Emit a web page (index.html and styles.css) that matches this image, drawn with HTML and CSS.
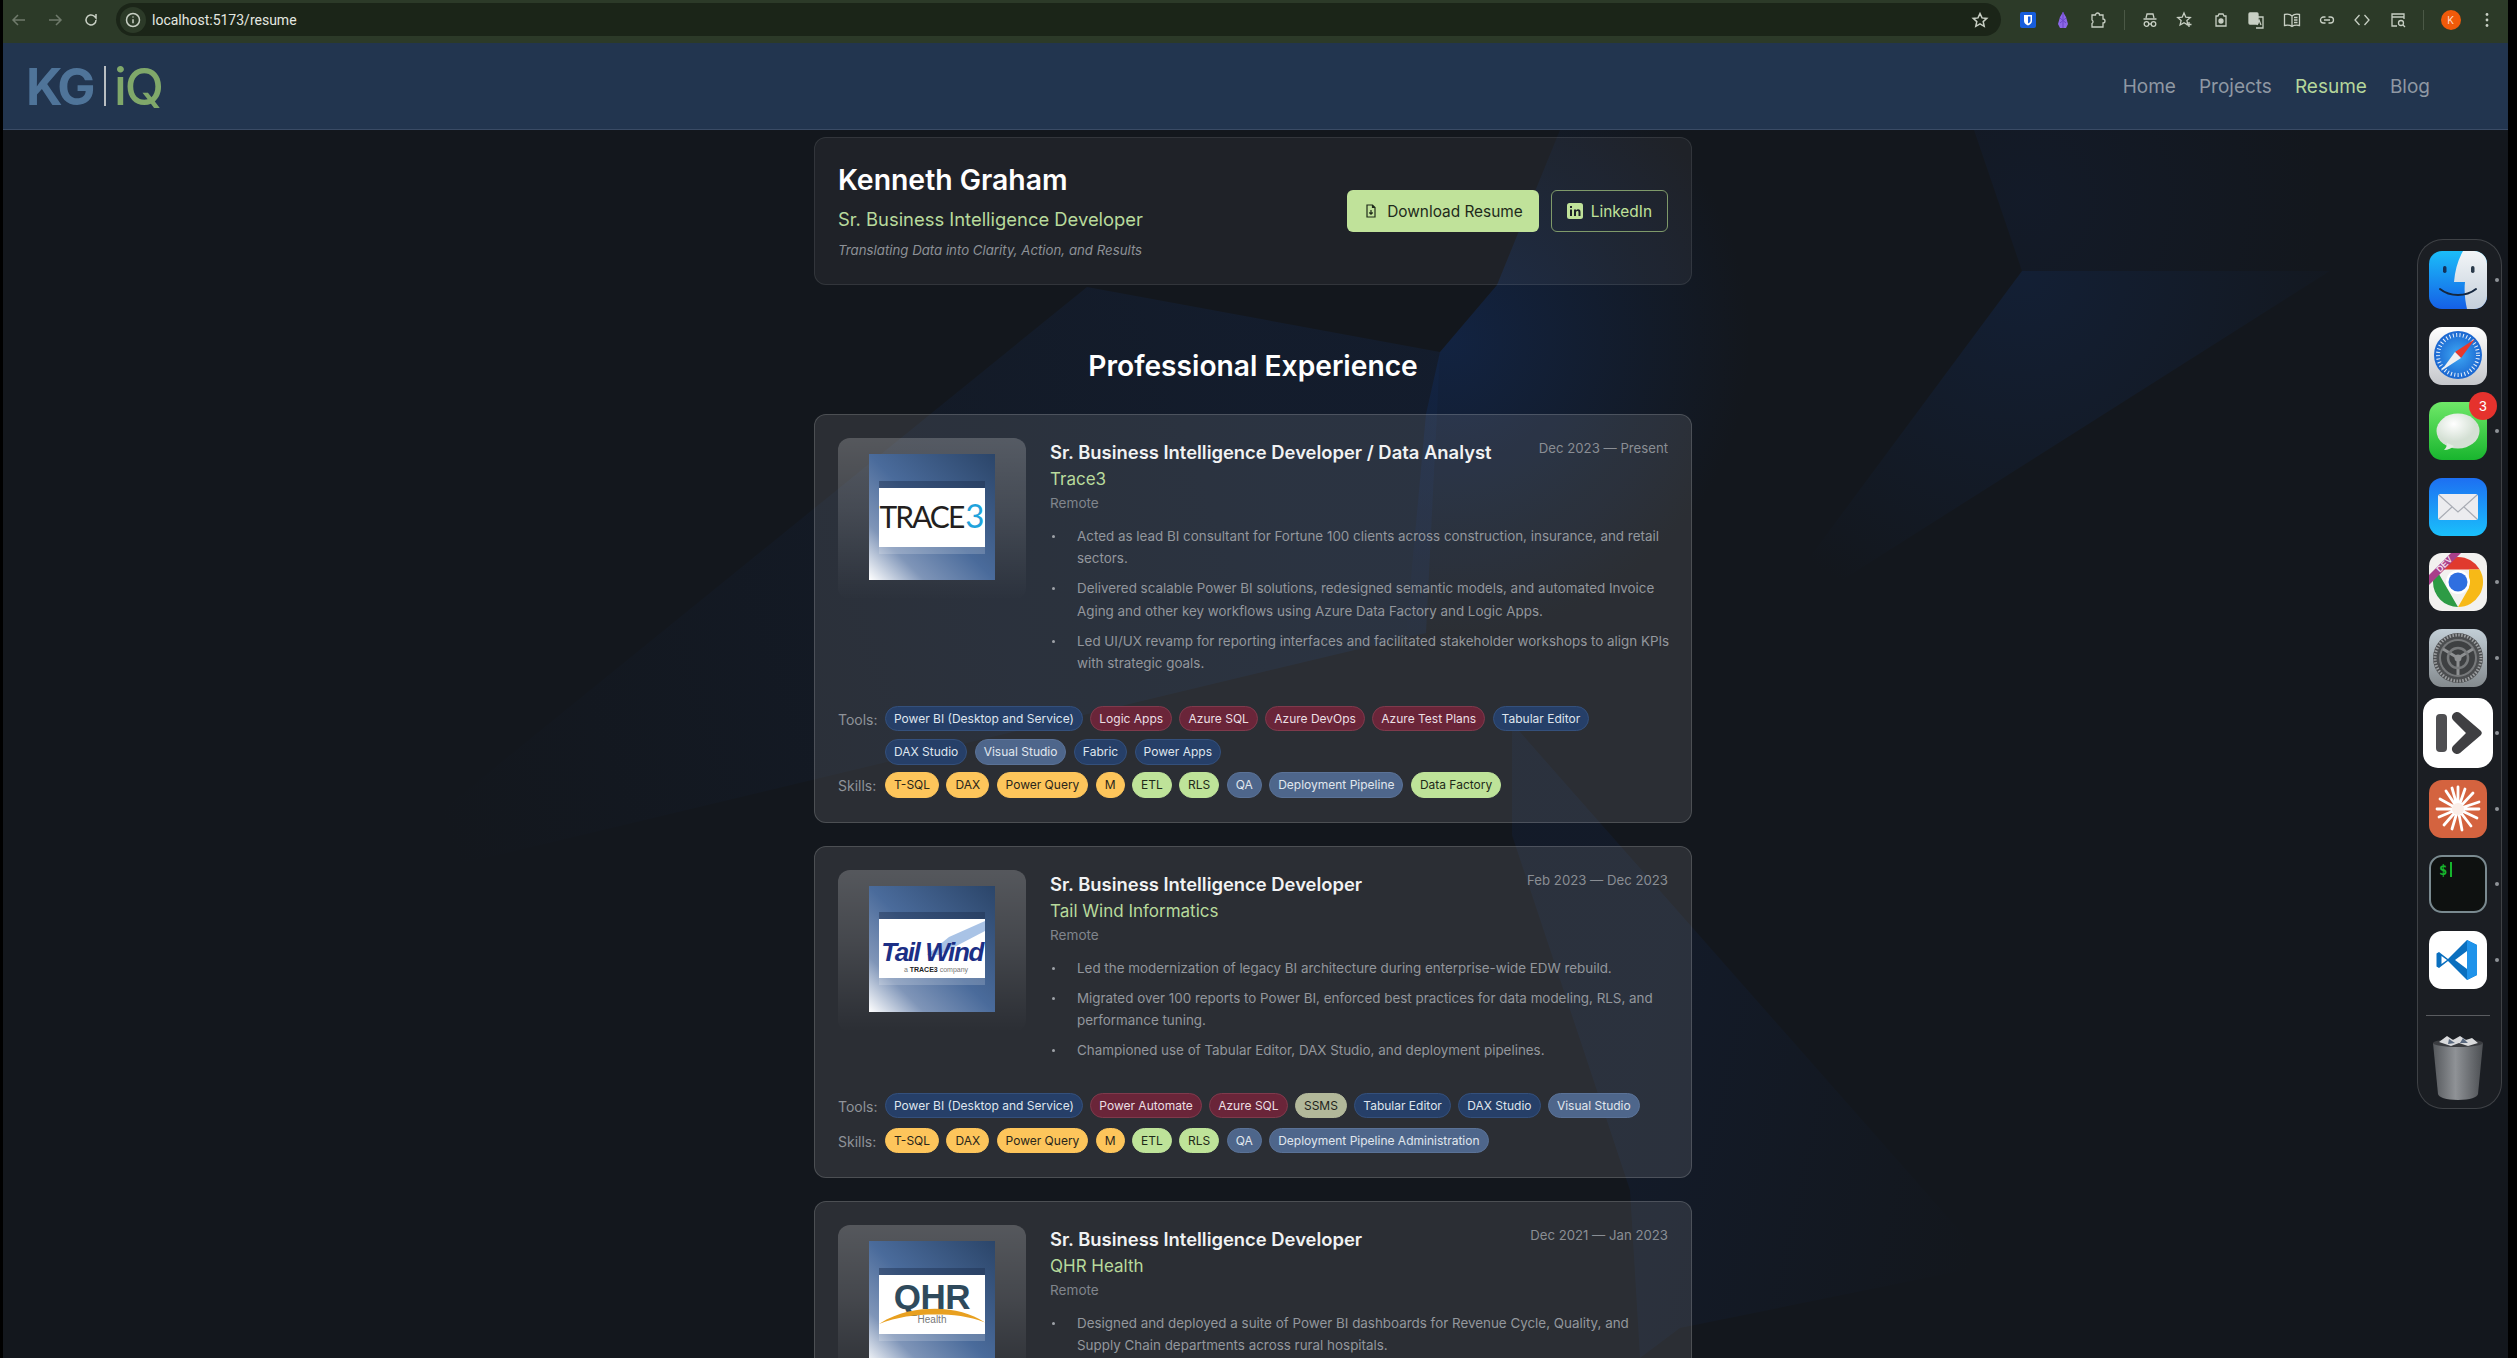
FILE: index.html
```html
<!DOCTYPE html>
<html lang="en">
<head>
<meta charset="utf-8">
<title>Resume</title>
<link rel="stylesheet" href="styles.css">
</head>
<body>
<div class="frame">
  <svg class="backdrop" viewBox="3 0 2505 1358" aria-hidden="true">
    <defs>
      <radialGradient id="gA" gradientUnits="userSpaceOnUse" cx="2022" cy="200" r="300"><stop offset="0" stop-color="#13203a" stop-opacity=".4"/><stop offset="1" stop-color="#13203a" stop-opacity="0"/></radialGradient>
      <radialGradient id="gB" gradientUnits="userSpaceOnUse" cx="2022" cy="271" r="360"><stop offset="0" stop-color="#13233f" stop-opacity=".7"/><stop offset="1" stop-color="#13233f" stop-opacity="0"/></radialGradient>
      <linearGradient id="gC" gradientUnits="userSpaceOnUse" x1="1300" y1="520" x2="440" y2="820"><stop offset="0" stop-color="#14233f" stop-opacity=".45"/><stop offset="1" stop-color="#14233f" stop-opacity="0"/></linearGradient>
      <linearGradient id="gD" gradientUnits="userSpaceOnUse" x1="1620" y1="1150" x2="1980" y2="1230"><stop offset="0" stop-color="#13203a" stop-opacity=".4"/><stop offset="1" stop-color="#13203a" stop-opacity="0"/></linearGradient>
      <radialGradient id="gE" gradientUnits="userSpaceOnUse" cx="1450" cy="340" r="300"><stop offset="0" stop-color="#12264a" stop-opacity=".8"/><stop offset="1" stop-color="#12264a" stop-opacity="0"/></radialGradient>
    </defs>
    <polygon points="1974,130 2022,271 2330,271 2420,130" fill="url(#gA)"/>
    <polygon points="2022,271 2330,271 1749,639" fill="url(#gB)"/>
    <polygon points="340,893 1087,287 1440,352 1426,633" fill="url(#gC)"/>
    <polygon points="1990,1265 1512,723 1512,835 1630,1190 1640,1358 1680,1328" fill="url(#gD)"/>
    <polygon points="1440,352 1497,285 1560,130 1760,130 1760,700 1400,700 1426,414" fill="url(#gE)"/>
  </svg>

  <div class="toolbar">
    <div class="tb-nav">
      <svg class="tb-icon dim" viewBox="0 0 18 18"><path d="M15 9H3M8 4 3 9l5 5"/></svg>
      <svg class="tb-icon dim" viewBox="0 0 18 18"><path d="M3 9h12M10 4l5 5-5 5"/></svg>
      <svg class="tb-icon" viewBox="0 0 18 18"><path d="M14 9a5 5 0 1 1-1.600-3.700L14 7V3"/></svg>
    </div>
    <div class="omnibox">
      <span class="site-info"><svg class="tb-icon" viewBox="0 0 18 18"><circle cx="9" cy="9" r="6.500"/><path d="M9 8.300v4M9 5.400v1"/></svg></span>
      <span class="url">localhost:5173/resume</span>
      <svg class="tb-icon star" viewBox="0 0 18 18"><path d="m9 2.500 2 4.400 4.800.5-3.600 3.200 1 4.700L9 12.900l-4.200 2.400 1-4.700-3.600-3.200 4.800-.5z"/></svg>
    </div>
    <div class="extensions">
      <svg class="ext" viewBox="0 0 18 18"><rect x="1" y="1" width="16" height="16" rx="2" fill="#175ddc"/><path d="M5 4h8v6c0 2-2 3.500-4 4.500C7 13.500 5 12 5 10z" fill="#fff"/><path d="M9 5.500h2.500V10c0 1-1.300 1.900-2.500 2.500z" fill="#175ddc"/></svg>
      <svg class="ext" viewBox="0 0 18 18"><path d="M9 1 12 6l2 7-2 4H6l-2-4 2-7z" fill="#8c67e8"/><path d="M9 1v16M6 7l6 5M12 7l-6 5" stroke="#6a45c8" fill="none"/></svg>
      <svg class="ext line" viewBox="0 0 18 18"><path d="M3 4h3.500a2 2 0 0 1 4 0H14v4a2 2 0 0 1 0 4v4H3v-3.500a2 2 0 0 0 0-3.500V4z"/></svg>
      <span class="tb-sep"></span>
      <svg class="ext line" viewBox="0 0 18 18"><path d="M5 7l1-4h6l1 4M2.500 8h13"/><circle cx="5.500" cy="13" r="2.300"/><circle cx="12.500" cy="13" r="2.300"/><path d="M7.800 13h2.400"/></svg>
      <svg class="ext line" viewBox="0 0 18 18"><path d="m8 2 1.800 4.200 4.500.4-3.400 3 1 4.400L8 11.700 4.100 14l1-4.400-3.400-3 4.500-.4z"/><path d="M13 11v5M10.500 13.500h5"/></svg>
      <svg class="ext line" viewBox="0 0 18 18"><path d="M4 5h2l1-2h4l1 2h2v10H4z"/><circle cx="9" cy="10" r="2" fill="#c8cfc4"/></svg>
      <svg class="ext line" viewBox="0 0 18 18"><rect x="2" y="2" width="9" height="11" rx="1" fill="#c8cfc4"/><path d="M7 6h9v11H9"/><path d="M10 14l2-5 2 5"/></svg>
      <svg class="ext line" viewBox="0 0 18 18"><path d="M9 5C7 3 4 3 1.500 3.500v11C4 14 7 14 9 15.500 11 14 14 14 16.500 14.500v-11C14 3 11 3 9 5zM9 5v10.500M11 6.500h3.500M11 9h3.500M11 11.500h3.500"/></svg>
      <svg class="ext line" viewBox="0 0 18 18"><path d="M7.500 6H5.500a3 3 0 0 0 0 6h2M10.500 6h2a3 3 0 0 1 0 6h-2M6 9h6"/></svg>
      <svg class="ext line" viewBox="0 0 18 18"><path d="M6.500 4 2 9l4.500 5M11.500 4 16 9l-4.500 5"/></svg>
      <svg class="ext line" viewBox="0 0 18 18"><path d="M8 15H3V3h12v5M3 6h12"/><circle cx="12" cy="12" r="2.500"/><path d="m14 14 2 2"/></svg>
      <span class="tb-sep"></span>
      <span class="avatar">K</span>
      <svg class="ext dots" viewBox="0 0 18 18"><circle cx="9" cy="3.500" r="1.400"/><circle cx="9" cy="9" r="1.400"/><circle cx="9" cy="14.500" r="1.400"/></svg>
    </div>
  </div>

  <header class="site-nav">
    <div class="logo"><span class="logo-kg">KG</span><span class="logo-bar"></span><span class="logo-iq">iQ</span></div>
    <nav class="nav-links">
      <a class="nav-link">Home</a>
      <a class="nav-link">Projects</a>
      <a class="nav-link active">Resume</a>
      <a class="nav-link">Blog</a>
    </nav>
  </header>

  <main class="page">
    <section class="hero card-soft">
      <div>
        <h1 class="hero-name">Kenneth Graham</h1>
        <p class="hero-role">Sr. Business Intelligence Developer</p>
        <p class="hero-tag">Translating Data into Clarity, Action, and Results</p>
      </div>
      <div class="hero-actions">
        <a class="btn btn-solid">
          <svg class="btn-icon" viewBox="0 0 14 14"><path d="M3 1h5.500L11 3.500V13H3zM8.500 1v2.500H11M7 6v4M5.300 8.500 7 10.200l1.700-1.700"/></svg>
          Download Resume</a>
        <a class="btn btn-outline">
          <svg class="btn-li" viewBox="0 0 16 16"><rect width="16" height="16" rx="2.500" fill="#c0e29a"/><path d="M3 6.500h2V13H3zM3 3h2v2H3zM7 6.500h2v1c.5-.8 1.300-1.200 2.200-1.200 1.500 0 2.300 1 2.300 2.700v4h-2V9.500c0-.9-.4-1.400-1.100-1.400-.8 0-1.400.6-1.400 1.500V13H7z" fill="#1c2128"/></svg>
          LinkedIn</a>
      </div>
    </section>

    <h2 class="section-title">Professional Experience</h2>

    <article class="job">
      <div class="job-top">
        <div class="logo-box"><div class="logo-img"><div class="logo-panel">
          <span class="trace">TRACE<span class="trace-3">3</span></span>
        </div></div></div>
        <div class="job-body">
          <div class="job-head">
            <h3 class="job-title">Sr. Business Intelligence Developer / Data Analyst</h3>
            <span class="job-date">Dec 2023 — Present</span>
          </div>
          <p class="job-company">Trace3</p>
          <p class="job-place">Remote</p>
          <ul class="job-list">
            <li>Acted as lead BI consultant for Fortune 100 clients across construction, insurance, and retail sectors.</li>
            <li>Delivered scalable Power BI solutions, redesigned semantic models, and automated Invoice Aging and other key workflows using Azure Data Factory and Logic Apps.</li>
            <li>Led UI/UX revamp for reporting interfaces and facilitated stakeholder workshops to align KPIs with strategic goals.</li>
          </ul>
        </div>
      </div>
      <div class="tag-block">
        <div class="tag-row"><span class="tag-label">Tools:</span><div class="tags">
          <span class="chip blue">Power BI (Desktop and Service)</span><span class="chip red">Logic Apps</span><span class="chip red">Azure SQL</span><span class="chip red">Azure DevOps</span><span class="chip red">Azure Test Plans</span><span class="chip blue">Tabular Editor</span><span class="chip blue">DAX Studio</span><span class="chip steel">Visual Studio</span><span class="chip blue">Fabric</span><span class="chip blue">Power Apps</span>
        </div></div>
        <div class="tag-row"><span class="tag-label">Skills:</span><div class="tags">
          <span class="chip amber">T-SQL</span><span class="chip amber">DAX</span><span class="chip amber">Power Query</span><span class="chip amber">M</span><span class="chip green">ETL</span><span class="chip green">RLS</span><span class="chip steel">QA</span><span class="chip steel">Deployment Pipeline</span><span class="chip green">Data Factory</span>
        </div></div>
      </div>
    </article>

    <article class="job">
      <div class="job-top">
        <div class="logo-box"><div class="logo-img"><div class="logo-panel tail-panel">
          <svg class="tail-swoosh" viewBox="0 0 106 59" preserveAspectRatio="none"><polygon points="106,2 106,12 60,36 48,36 70,18" fill="#a9c3e6"/></svg>
          <span class="tail">Tail Wind</span>
          <span class="tail-sub">a <b>TRACE3</b> company</span>
        </div></div></div>
        <div class="job-body">
          <div class="job-head">
            <h3 class="job-title">Sr. Business Intelligence Developer</h3>
            <span class="job-date">Feb 2023 — Dec 2023</span>
          </div>
          <p class="job-company">Tail Wind Informatics</p>
          <p class="job-place">Remote</p>
          <ul class="job-list">
            <li>Led the modernization of legacy BI architecture during enterprise-wide EDW rebuild.</li>
            <li>Migrated over 100 reports to Power BI, enforced best practices for data modeling, RLS, and performance tuning.</li>
            <li>Championed use of Tabular Editor, DAX Studio, and deployment pipelines.</li>
          </ul>
        </div>
      </div>
      <div class="tag-block">
        <div class="tag-row"><span class="tag-label">Tools:</span><div class="tags">
          <span class="chip blue">Power BI (Desktop and Service)</span><span class="chip red">Power Automate</span><span class="chip red">Azure SQL</span><span class="chip sage">SSMS</span><span class="chip blue">Tabular Editor</span><span class="chip blue">DAX Studio</span><span class="chip steel">Visual Studio</span>
        </div></div>
        <div class="tag-row"><span class="tag-label">Skills:</span><div class="tags">
          <span class="chip amber">T-SQL</span><span class="chip amber">DAX</span><span class="chip amber">Power Query</span><span class="chip amber">M</span><span class="chip green">ETL</span><span class="chip green">RLS</span><span class="chip steel">QA</span><span class="chip steel">Deployment Pipeline Administration</span>
        </div></div>
      </div>
    </article>

    <article class="job">
      <div class="job-top">
        <div class="logo-box"><div class="logo-img"><div class="logo-panel qhr-panel">
          <span class="qhr">QHR</span>
          <svg class="qhr-arc" viewBox="0 0 106 20" preserveAspectRatio="none"><path d="M0 20C20 4 40 1 56 1c20 0 36 6 50 17-16-8-32-10-50-10C36 8 18 11 0 20z" fill="#e8a020"/></svg>
          <span class="qhr-sub">Health</span>
        </div></div></div>
        <div class="job-body">
          <div class="job-head">
            <h3 class="job-title">Sr. Business Intelligence Developer</h3>
            <span class="job-date">Dec 2021 — Jan 2023</span>
          </div>
          <p class="job-company">QHR Health</p>
          <p class="job-place">Remote</p>
          <ul class="job-list">
            <li>Designed and deployed a suite of Power BI dashboards for Revenue Cycle, Quality, and Supply Chain departments across rural hospitals.</li>
          </ul>
        </div>
      </div>
    </article>
  </main>

  <aside class="dock">
    <div class="dock-item running">
      <svg class="dock-icon" viewBox="0 0 58 58"><defs><linearGradient id="fa" x1="0" y1="0" x2="0" y2="1"><stop offset="0" stop-color="#1bbdf9"/><stop offset="1" stop-color="#1560e6"/></linearGradient><linearGradient id="fb" x1="0" y1="0" x2="0" y2="1"><stop offset="0" stop-color="#f2f5f7"/><stop offset="1" stop-color="#c4cfda"/></linearGradient><clipPath id="fc"><rect width="58" height="58" rx="13"/></clipPath></defs><g clip-path="url(#fc)"><rect width="58" height="58" fill="url(#fa)"/><path d="M34 0C29 9 26 19 25 31h11c-1 9 0 18 2 27h20V0z" fill="url(#fb)"/></g><rect x="14" y="15" width="3.500" height="7" rx="1.700" fill="#13325a"/><rect x="42" y="15" width="3.500" height="7" rx="1.700" fill="#2a3a4a"/><path d="M11 38c10 8 26 8 36 0" fill="none" stroke="#15273f" stroke-width="2" stroke-linecap="round"/></svg>
    </div>
    <div class="dock-item">
      <svg class="dock-icon" viewBox="0 0 58 58"><defs><linearGradient id="sa" x1="0" y1="0" x2="0" y2="1"><stop offset="0" stop-color="#fff"/><stop offset="1" stop-color="#c4c6ca"/></linearGradient><radialGradient id="sb"><stop offset="0" stop-color="#3fa9f5"/><stop offset="1" stop-color="#1a66d0"/></radialGradient></defs><rect width="58" height="58" rx="13" fill="url(#sa)"/><circle cx="29" cy="28" r="24" fill="url(#sb)"/><circle cx="29" cy="28" r="20" fill="none" stroke="#fff" stroke-width="4" stroke-dasharray="1 2.400" opacity=".9"/><polygon points="46,12 32,31 26,25" fill="#e8382c"/><polygon points="12,44 32,31 26,25" fill="#eef0f2"/></svg>
    </div>
    <div class="dock-item running">
      <svg class="dock-icon" viewBox="0 0 58 58"><defs><linearGradient id="ma" x1="0" y1="0" x2="0" y2="1"><stop offset="0" stop-color="#6fe868"/><stop offset="1" stop-color="#18b52e"/></linearGradient><radialGradient id="mb" cx=".4" cy=".3"><stop offset="0" stop-color="#fff"/><stop offset="1" stop-color="#d4e0d4"/></radialGradient></defs><rect width="58" height="58" rx="13" fill="url(#ma)"/><ellipse cx="29" cy="29" rx="21.500" ry="17.500" fill="url(#mb)"/><path d="M18 41c0 3-1 5-3 7 4 0 8-2 10-4z" fill="#e4ece4"/></svg>
      <span class="dock-badge">3</span>
    </div>
    <div class="dock-item">
      <svg class="dock-icon" viewBox="0 0 58 58"><defs><linearGradient id="ea" x1="0" y1="0" x2="0" y2="1"><stop offset="0" stop-color="#1d6ff2"/><stop offset="1" stop-color="#1ac0fb"/></linearGradient></defs><rect width="58" height="58" rx="13" fill="url(#ea)"/><rect x="9" y="16" width="40" height="26" rx="2.500" fill="#ececef"/><path d="M10 17l19 17 19-17M10 41l13-12M48 41 35 29" fill="none" stroke="#a9acb4" stroke-width="1.200"/></svg>
    </div>
    <div class="dock-item running">
      <svg class="dock-icon" viewBox="0 0 58 58"><defs><clipPath id="cc"><rect width="58" height="58" rx="13"/></clipPath></defs><rect width="58" height="58" rx="13" fill="#f2f1ef"/><path d="M29 4a25 25 0 0 1 21.700 12.500H29z" fill="#e03a2e"/><path d="M7.300 16.500A25 25 0 0 1 29 4v12.500z" fill="#e03a2e"/><path d="M4 29A25 25 0 0 1 7.300 16.500L18 35l11 19A25 25 0 0 1 4 29z" fill="#2d9b45"/><path d="M50.700 16.500A25 25 0 0 1 29 54l11-19V16.500z" fill="#f7b917"/><circle cx="29" cy="29" r="12" fill="#fff"/><circle cx="29" cy="29" r="9.500" fill="#2f6fe0"/><g clip-path="url(#cc)"><path d="M-6 28 28-6l10 0L-6 38z" fill="#a83f8a"/></g><text class="dev-text" x="11" y="20" transform="rotate(-45 11 20)">DEV</text></svg>
    </div>
    <div class="dock-item running">
      <svg class="dock-icon" viewBox="0 0 58 58"><defs><linearGradient id="ga" x1="0" y1="0" x2="0" y2="1"><stop offset="0" stop-color="#c2ced6"/><stop offset="1" stop-color="#848a8e"/></linearGradient></defs><rect width="58" height="58" rx="13" fill="url(#ga)"/><circle cx="29" cy="29" r="25" fill="#4c4e50"/><circle cx="29" cy="29" r="23" fill="none" stroke="#9ea0a2" stroke-width="3" stroke-dasharray="1.500 1.500"/><circle cx="29" cy="29" r="19" fill="#77797b"/><circle cx="29" cy="29" r="17" fill="#3e4042"/><path d="M29 29 14 20M29 29l15-9M29 29v17" stroke="#8e9092" stroke-width="3" fill="none"/><circle cx="29" cy="29" r="10" fill="none" stroke="#77797b" stroke-width="2.500"/><circle cx="29" cy="29" r="3.500" fill="#8e9092"/></svg>
    </div>
    <div class="dock-item big running">
      <svg class="dock-icon-big" viewBox="0 0 70 70"><rect width="70" height="70" rx="15" fill="#fff"/><rect x="13" y="16" width="11" height="38" rx="4" fill="#4f4f52"/><path d="M30 16a5 5 0 0 1 7-1l21 18a3 3 0 0 1 0 4L37 55a5 5 0 0 1-7-1 5 5 0 0 1 0-6l13-13-13-13a5 5 0 0 1 0-6z" fill="#3f3f42"/></svg>
    </div>
    <div class="dock-item running">
      <svg class="dock-icon" viewBox="0 0 58 58"><rect width="58" height="58" rx="13" fill="#d4633f"/><g stroke="#fff" stroke-linecap="round" fill="none"><path d="M29 29V7M29 29l7-20M29 29 44 13M29 29 50 22M29 29h21M29 29l19 9M29 29l13 17M29 29l4 21M29 29l-6 20M29 29 15 45M29 29 10 37M29 29H8M29 29 11 19M29 29 17 11M29 29 23 8" stroke-width="2.800"/></g><circle cx="29" cy="29" r="6" fill="#fbeee8"/></svg>
    </div>
    <div class="dock-item running">
      <div class="terminal"><span class="terminal-text">$</span><span class="terminal-caret"></span></div>
    </div>
    <div class="dock-item running">
      <svg class="dock-icon" viewBox="0 0 58 58"><rect width="58" height="58" rx="13" fill="#fff"/><path d="M38 9 19 28 10 21l-2.500 1.500v13L10 37l9-7 19 19 10-5V14z" fill="#0a6fbf"/><path d="M38 9l10 5v30l-10 5z" fill="#1f93ea"/><path d="M38 20v18L26 29z" fill="#fff"/><path d="M12.500 25 18 29l-5.500 4z" fill="#fff"/></svg>
    </div>
    <div class="dock-sep"></div>
    <svg class="trash" viewBox="0 0 50 65"><defs><linearGradient id="ta" x1="0" y1="0" x2="1" y2="0"><stop offset="0" stop-color="#55585c"/><stop offset=".45" stop-color="#8f9296"/><stop offset="1" stop-color="#4c4f53"/></linearGradient></defs><path d="M0 8h50l-5 51c-.3 3-8 6-20 6S5.300 62 5 59z" fill="url(#ta)"/><ellipse cx="25" cy="8" rx="25" ry="4" fill="#3a3c40"/><path d="M6 7l8-6 6 4 7-4 6 4 6-2 6 5-10 3-9-3-8 3z" fill="#d9dadc"/><path d="M16 4l6 4-7 1zM30 3l5 5-8 0z" fill="#5b6a80"/></svg>
  </aside>
</div>
</body>
</html>
```

FILE: styles.css
```css
* { box-sizing: border-box; }
html, body { margin: 0; height: 100%; background: #000; overflow: hidden; }
body { font-family: Inter, "Liberation Sans", sans-serif; color: #fff; }
h1, h2, h3, p, ul { margin: 0; padding: 0; }

.frame {
  position: relative;
  width: 2505px;
  height: 1358px;
  margin-left: 3px;
  overflow: hidden;
  background: #13171d;
}
.backdrop { position: absolute; left: 0; top: 0; width: 2505px; height: 1358px; }

/* browser toolbar */
.toolbar {
  position: relative;
  display: flex;
  align-items: center;
  height: 43px;
  padding: 0 12px 4px 0;
  background: #2c3a28;
}
.tb-nav { display: flex; width: 113px; padding-left: 7px; gap: 18px; flex: none; }
.tb-icon { width: 18px; height: 18px; fill: none; stroke: #c8cfc4; stroke-width: 1.500; flex: none; }
.tb-icon.dim { stroke: #6f7a6b; }
.omnibox {
  display: flex;
  align-items: center;
  flex: 1 1 auto;
  height: 33px;
  border-radius: 17px;
  background: #1b2518;
  padding: 0 12px 0 4px;
  font-family: Roboto, Inter, sans-serif;
}
.site-info {
  display: flex;
  align-items: center;
  justify-content: center;
  width: 26px;
  height: 26px;
  border-radius: 50%;
  background: #2c3a28;
}
.url { margin-left: 6px; font-size: 14px; color: #e4e8e0; flex: 1; }
.extensions { display: flex; align-items: center; gap: 17.400px; padding-left: 18px; flex: none; }
.ext { width: 18px; height: 18px; flex: none; }
.ext.line { fill: none; stroke: #c8cfc4; stroke-width: 1.300; }
.ext.dots { fill: #c8cfc4; }
.tb-sep { width: 1px; height: 20px; background: #4b5846; flex: none; margin: 0 -1px; }
.avatar {
  display: flex;
  align-items: center;
  justify-content: center;
  width: 20px;
  height: 20px;
  border-radius: 50%;
  background: #f05a0a;
  font-size: 10px;
  color: #ffd9c4;
  flex: none;
}

/* site nav */
.site-nav {
  position: relative;
  display: flex;
  align-items: center;
  justify-content: space-between;
  height: 87px;
  padding: 0 78px 0 23px;
  background: #22354f;
  border-bottom: 1px solid #3a4b65;
}
.logo { display: flex; align-items: center; font-size: 51px; line-height: 1; }
.logo-kg { color: #4f7499; font-weight: 700; letter-spacing: -3.500px; }
.logo-bar { width: 2px; height: 40px; background: #b9bec2; margin: 0 8px 0 12px; }
.logo-iq { color: #80a86a; font-weight: 500; letter-spacing: -2px; }
.nav-links { display: flex; gap: 23px; }
.nav-link { font-size: 19px; font-weight: 400; color: #8f98a3; }
.nav-link.active { color: #b5d79b; }

/* page */
.page {
  position: relative;
  display: flex;
  flex-direction: column;
  width: 878px;
  margin-left: 811px;
  padding-top: 7px;
}
.hero {
  display: flex;
  align-items: center;
  justify-content: space-between;
  padding: 23px;
  border: 1px solid rgba(255, 255, 255, .09);
  border-radius: 12px;
  background: rgba(255, 255, 255, .05);
}
.hero-name { font-size: 28.400px; line-height: 38px; font-weight: 600; color: #fff; }
.hero-role { margin-top: 6px; font-size: 18.400px; line-height: 28px; color: #b8da9c; }
.hero-tag { margin-top: 6px; font-size: 13.250px; line-height: 22px; font-style: italic; color: #8d9197; }
.hero-actions { display: flex; gap: 12px; }
.btn {
  display: flex;
  align-items: center;
  gap: 8px;
  height: 42px;
  padding: 0 16px;
  border-radius: 6px;
  font-size: 15.400px;
}
.btn-solid { background: #c0e29a; color: #1e2a1a; gap: 9px; padding: 0 16px 0 17px; }
.btn-outline { border: 1.500px solid #7f9a6a; color: #c0e29a; padding: 0 15px; }
.btn-icon { width: 14px; height: 14px; fill: none; stroke: #1e2a1a; stroke-width: 1.200; }
.btn-li { width: 16px; height: 16px; }

.section-title {
  margin: 63px 0 30px;
  text-align: center;
  font-size: 28.200px;
  line-height: 36px;
  font-weight: 600;
  color: #fff;
}

.job {
  margin-bottom: 23px;
  padding: 23px 23px 22.500px;
  border: 1px solid rgba(255, 255, 255, .16);
  border-radius: 12px;
  background: rgba(255, 255, 255, .1);
}
.job-top { display: flex; gap: 24px; }
.logo-box {
  display: flex;
  justify-content: center;
  flex: none;
  width: 188px;
  height: 162px;
  padding-top: 16px;
  border-radius: 12px;
  background: linear-gradient(to bottom, rgba(255, 255, 255, .2), rgba(255, 255, 255, .12) 45%, rgba(255, 255, 255, 0));
}
.logo-img {
  display: flex;
  align-items: center;
  justify-content: center;
  width: 126px;
  height: 126px;
  background: linear-gradient(45deg, #fff 0%, #7f95b8 22%, #4a6b9b 50%, #2b4569 100%);
}
.logo-panel {
  position: relative;
  display: flex;
  flex-direction: column;
  align-items: center;
  justify-content: center;
  width: 106px;
  height: 59px;
  background: #fff;
  box-shadow: 0 -7px 0 rgba(28, 46, 78, .45), 0 7px 0 rgba(255, 255, 255, .18);
}
.trace { font-family: Lato, sans-serif; font-size: 30px; line-height: 30px; letter-spacing: -2px; color: #231f20; white-space: nowrap; margin-top: -3px; }
.trace-3 { color: #1fa3dc; font-size: 33px; margin-left: 2px; letter-spacing: 0; }
.tail-panel { justify-content: flex-start; padding-top: 20px; }
.tail-swoosh { position: absolute; left: 0; top: 0; width: 106px; height: 59px; }
.tail {
  position: relative;
  font-family: "Liberation Sans", sans-serif;
  font-style: italic;
  font-weight: 700;
  font-size: 26px;
  line-height: 26px;
  letter-spacing: -1.400px;
  white-space: nowrap;
  color: #1c2f86;
}
.tail-sub { font-family: "Liberation Sans", sans-serif; font-size: 7px; line-height: 9px; color: #777; margin-left: 8px; white-space: nowrap; }
.tail-sub b { color: #222; }
.qhr-panel { justify-content: flex-start; }
.qhr { font-family: "Liberation Sans", sans-serif; font-weight: 700; font-size: 35px; line-height: 35px; margin-top: 4px; color: #2f4a5c; letter-spacing: -.5px; }
.qhr-arc { width: 106px; height: 16px; margin-top: -6px; flex: none; }
.qhr-sub { font-family: "Liberation Sans", sans-serif; font-size: 10px; line-height: 10px; margin-top: -9px; color: #777; }

.job-body { flex: 1; min-width: 0; }
.job-head { display: flex; justify-content: space-between; gap: 16px; }
.job-title { font-size: 18.400px; line-height: 28px; font-weight: 600; color: #f1f2f3; }
.job-date { font-size: 13.200px; line-height: 20px; color: #8a8e94; white-space: nowrap; }
.job-company { margin-top: 1px; font-size: 17px; line-height: 24px; color: #b8da9c; }
.job-place { margin-top: 2px; font-size: 13.600px; line-height: 20px; color: #80858c; }
.job-list { list-style: none; margin: 12px -4px 0 0; }
.job-list li {
  position: relative;
  padding-left: 27px;
  margin-bottom: 7.600px;
  font-size: 13.400px;
  line-height: 22.400px;
  color: #93979d;
}
.job-list li:last-child { margin-bottom: 0; }
.job-list li::before {
  content: "";
  position: absolute;
  left: 2px;
  top: 10px;
  width: 3px;
  height: 3px;
  border-radius: 50%;
  background: #9ea2a8;
}

.tag-block { display: flex; flex-direction: column; gap: 7.500px; margin-top: 31.500px; }
.tag-row { display: flex; gap: 8px; align-items: flex-start; }
.tag-label { width: 39px; flex: none; font-size: 14px; line-height: 27px; color: #8f9399; }
.tags { display: flex; flex-wrap: wrap; gap: 8px 7.400px; }
.chip {
  height: 25.300px;
  padding: 0 8px;
  border: 1px solid transparent;
  border-radius: 13px;
  font-size: 12px;
  line-height: 23.300px;
  white-space: nowrap;
}
.chip.blue { background: #263f68; border-color: #34507c; color: #dfe5ee; }
.chip.red { background: #6a2539; border-color: #7f3a4c; color: #ecdfe3; }
.chip.steel { background: #4e668b; border-color: #5a7297; color: #e0e6ee; }
.chip.amber { background: #fdc55b; border-color: #fdc55b; color: #2a261a; }
.chip.green { background: #bee399; border-color: #bee399; color: #1e2a18; }
.chip.sage { background: #b2b89a; border-color: #b2b89a; color: #22241c; }

/* dock */
.dock {
  position: absolute;
  left: 2414px;
  top: 239px;
  display: flex;
  flex-direction: column;
  align-items: center;
  width: 85px;
  height: 870px;
  padding: 11px 3px 0 0;
  gap: 17.500px;
  background: #1b1e23;
  border: 1px solid rgba(255, 255, 255, .16);
  border-radius: 26px;
}
.dock-item { position: relative; display: flex; justify-content: center; width: 58px; height: 58px; flex: none; }
.dock-item.big { margin: -6px 0; height: 70px; width: 70px; }
.dock-icon { width: 58px; height: 58px; display: block; }
.dock-icon-big { width: 70px; height: 70px; display: block; }
.dock-item.running::after {
  content: "";
  position: absolute;
  right: -12px;
  top: 27px;
  width: 4px;
  height: 4px;
  border-radius: 50%;
  background: #8f9398;
}
.dock-item.big.running::after { right: -6px; top: 33px; }
.dock-badge {
  position: absolute;
  left: 40px;
  top: -10px;
  display: flex;
  align-items: center;
  justify-content: center;
  width: 28px;
  height: 28px;
  border-radius: 50%;
  background: #e5322d;
  color: #fff;
  font-size: 14px;
  font-weight: 500;
  font-family: "Liberation Sans", sans-serif;
}
.dev-text { font-family: "Liberation Sans", sans-serif; font-size: 9px; font-weight: 700; fill: #f3d9e9; }
.terminal {
  display: flex;
  align-items: flex-start;
  width: 58px;
  height: 58px;
  padding: 5px 0 0 8px;
  border-radius: 13px;
  background: #0e1110;
  border: 2px solid #7a8a90;
}
.terminal-text { font-family: "DejaVu Sans Mono", monospace; font-size: 14px; font-weight: 700; line-height: 16px; color: #16b52d; }
.terminal-caret { width: 2px; height: 15px; margin-left: 3px; background: #16b52d; }
.dock-sep { width: 64px; height: 1px; flex: none; margin: 8.500px 0 2px; background: rgba(255, 255, 255, .28); }
.trash { width: 50px; height: 65px; flex: none; }
```
